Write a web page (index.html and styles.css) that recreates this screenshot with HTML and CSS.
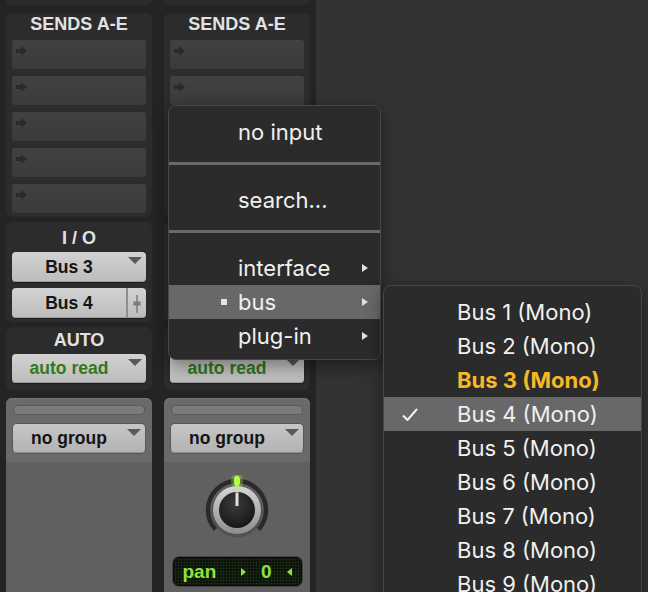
FILE: index.html
```html
<!DOCTYPE html>
<html>
	<head>
		<title>Mix Window - Input Menu</title>
		<link rel="stylesheet" href="styles.css">
	</head>
	<body>
		<div class="mixer">
			<div class="strip">
				<div class="panel stub"></div>
				<div class="panel sends">
					<div class="head">SENDS A-E</div>
					<div class="slot"><svg class="send-arrow" width="11" height="10" viewBox="0 0 11 10"><path d="M0 3H5V0L11 5L5 10V7H0Z"/></svg></div>
					<div class="slot"><svg class="send-arrow" width="11" height="10" viewBox="0 0 11 10"><path d="M0 3H5V0L11 5L5 10V7H0Z"/></svg></div>
					<div class="slot"><svg class="send-arrow" width="11" height="10" viewBox="0 0 11 10"><path d="M0 3H5V0L11 5L5 10V7H0Z"/></svg></div>
					<div class="slot"><svg class="send-arrow" width="11" height="10" viewBox="0 0 11 10"><path d="M0 3H5V0L11 5L5 10V7H0Z"/></svg></div>
					<div class="slot"><svg class="send-arrow" width="11" height="10" viewBox="0 0 11 10"><path d="M0 3H5V0L11 5L5 10V7H0Z"/></svg></div>
				</div>
				<div class="panel io">
					<div class="head">I / O</div>
					<div class="btn tall"><span class="label">Bus 3</span><span class="side"><i class="tri"></i></span></div>
					<div class="btn tall"><span class="label">Bus 4</span><span class="side split"><svg width="10" height="18" viewBox="0 0 10 18"><path d="M5 0V18" stroke="#7a7a7a" stroke-width="1.5"/><rect x="1.5" y="6.5" width="7" height="4" fill="#7a7a7a"/></svg></span></div>
				</div>
				<div class="panel auto">
					<div class="head">AUTO</div>
					<div class="btn green"><span class="label">auto read</span><span class="side"><i class="tri"></i></span></div>
				</div>
				<div class="panel group">
					<div class="bar"></div>
					<div class="btn"><span class="label">no group</span><span class="side"><i class="tri"></i></span></div>
				</div>
				<div class="lower"></div>
			</div>
			<div class="strip">
				<div class="panel stub"></div>
				<div class="panel sends">
					<div class="head">SENDS A-E</div>
					<div class="slot"><svg class="send-arrow" width="11" height="10" viewBox="0 0 11 10"><path d="M0 3H5V0L11 5L5 10V7H0Z"/></svg></div>
					<div class="slot"><svg class="send-arrow" width="11" height="10" viewBox="0 0 11 10"><path d="M0 3H5V0L11 5L5 10V7H0Z"/></svg></div>
					<div class="slot"><svg class="send-arrow" width="11" height="10" viewBox="0 0 11 10"><path d="M0 3H5V0L11 5L5 10V7H0Z"/></svg></div>
					<div class="slot"><svg class="send-arrow" width="11" height="10" viewBox="0 0 11 10"><path d="M0 3H5V0L11 5L5 10V7H0Z"/></svg></div>
					<div class="slot"><svg class="send-arrow" width="11" height="10" viewBox="0 0 11 10"><path d="M0 3H5V0L11 5L5 10V7H0Z"/></svg></div>
				</div>
				<div class="panel io">
					<div class="head">I / O</div>
					<div class="btn tall"><span class="label">Bus 4</span><span class="side"><i class="tri"></i></span></div>
					<div class="btn tall"><span class="label">Out 1-2</span><span class="side split"></span></div>
				</div>
				<div class="panel auto">
					<div class="head">AUTO</div>
					<div class="btn green"><span class="label">auto read</span><span class="side"><i class="tri"></i></span></div>
				</div>
				<div class="panel group">
					<div class="bar"></div>
					<div class="btn"><span class="label">no group</span><span class="side"><i class="tri"></i></span></div>
				</div>
				<div class="lower">
					<svg class="knob" width="70" height="70" viewBox="0 0 70 70">
						<defs>
							<linearGradient id="ring" x1="0" y1="0" x2="0" y2="1">
								<stop offset="0" stop-color="#d6d6d6"/>
								<stop offset="1" stop-color="#8c8c8c"/>
							</linearGradient>
							<radialGradient id="cap" cx="0.45" cy="0.35" r="0.7">
								<stop offset="0" stop-color="#3c3c3c"/>
								<stop offset="1" stop-color="#141414"/>
							</radialGradient>
						</defs>
						<path d="M13.4 54.4A29 29 0 1 1 56.6 54.4" fill="none" stroke="#2a2a2a" stroke-width="4.5"/>
						<circle cx="35" cy="37" r="25.5" fill="#474747" opacity="0.6"/>
						<circle cx="35" cy="35" r="24" fill="url(#ring)"/>
						<circle cx="35" cy="35" r="18" fill="url(#cap)"/>
						<path d="M35 17.5V31" stroke="#e0e0e0" stroke-width="3"/>
						<ellipse cx="35" cy="6" rx="6" ry="8" fill="#9cff2e" opacity="0.3"/>
						<ellipse cx="35" cy="6" rx="3.2" ry="5.5" fill="#b4ff48"/>
					</svg>
					<div class="pan">
						<span class="pan-name">pan</span>
						<i class="pt right"></i>
						<span class="pan-val">0</span>
						<i class="pt left"></i>
					</div>
				</div>
			</div>
		</div>

		<div class="menu input-menu">
			<div class="item"><span class="mark"></span><span>no input</span></div>
			<div class="sep"></div>
			<div class="item"><span class="mark"></span><span>search...</span></div>
			<div class="sep"></div>
			<div class="item"><span class="mark"></span><span>interface</span><i class="arrow"></i></div>
			<div class="item hl"><span class="mark"><i class="bullet"></i></span><span>bus</span><i class="arrow"></i></div>
			<div class="item"><span class="mark"></span><span>plug-in</span><i class="arrow"></i></div>
		</div>

		<div class="menu bus-menu">
			<div class="item"><span class="mark"></span><span>Bus 1 (Mono)</span></div>
			<div class="item"><span class="mark"></span><span>Bus 2 (Mono)</span></div>
			<div class="item used"><span class="mark"></span><span>Bus 3 (Mono)</span></div>
			<div class="item hl"><span class="mark"><svg width="16" height="13" viewBox="0 0 16 13"><path d="M1 7.5L5.5 12L15 1" fill="none" stroke="#f2f2f2" stroke-width="2"/></svg></span><span>Bus 4 (Mono)</span></div>
			<div class="item"><span class="mark"></span><span>Bus 5 (Mono)</span></div>
			<div class="item"><span class="mark"></span><span>Bus 6 (Mono)</span></div>
			<div class="item"><span class="mark"></span><span>Bus 7 (Mono)</span></div>
			<div class="item"><span class="mark"></span><span>Bus 8 (Mono)</span></div>
			<div class="item"><span class="mark"></span><span>Bus 9 (Mono)</span></div>
		</div>
	</body>
</html>
```

FILE: styles.css
```css
body {
	margin: 0;
	padding: 0;
	overflow: hidden;
	height: 592px;
	position: relative;
	background-color: #333333;
	font-family: "Liberation Sans", Arial, sans-serif;
}
.mixer {
	display: flex;
	height: 592px;
}
.strip {
	width: 146px;
	padding: 0 6px;
	display: flex;
	flex-direction: column;
	background-color: #242424;
}
.panel {
	background-color: #2c2c2c;
	border-radius: 6px;
}
.stub {
	height: 5px;
	border-radius: 0 0 6px 6px;
	margin-bottom: 8px;
}
.head {
	height: 27px;
	line-height: 22px;
	text-align: center;
	color: #e2e2e2;
	font-size: 18px;
	font-weight: bold;
}
.sends {
	padding-bottom: 4px;
	margin-bottom: 5px;
}
.slot {
	height: 29px;
	box-sizing: border-box;
	padding: 6px 0 0 4px;
	margin: 0 6px 7px;
	border-radius: 3px;
	background: linear-gradient(#414141, #3b3b3b);
}
.slot:last-child {
	margin-bottom: 0;
}
.send-arrow {
	display: block;
	fill: #2a2a2a;
}
.io {
	padding-bottom: 4px;
	margin-bottom: 5px;
}
.io .head {
	height: 30px;
	line-height: 32px;
}
.io .btn + .btn {
	margin-top: 6px;
}
.auto {
	padding-bottom: 7px;
	margin-bottom: 8px;
}
.auto .head {
	line-height: 27px;
}
.btn {
	display: flex;
	height: 29px;
	margin: 0 6px;
	border-radius: 4px;
	background: linear-gradient(#d2d2d2, #bcbcbc);
	box-shadow: inset 0 -1px 0 #9a9a9a, 0 1px 1px rgba(0, 0, 0, 0.35);
	color: #141414;
	font-size: 17.5px;
	font-weight: bold;
	line-height: 29px;
}
.btn.tall {
	height: 30px;
	line-height: 30px;
}
.btn .label {
	flex: 1;
	text-align: center;
	white-space: nowrap;
}
.btn .side {
	width: 20px;
	position: relative;
}
.btn .side.split {
	border-left: 2px solid #8e8e8e;
	display: flex;
	justify-content: center;
	padding-top: 7px;
	box-sizing: border-box;
}
.tri {
	position: absolute;
	top: 5px;
	right: 4px;
	border-left: 7px solid transparent;
	border-right: 7px solid transparent;
	border-top: 7px solid #5a5a5a;
}
.btn.green {
	color: #2f7a1f;
}
.group {
	background-color: #6a6a6a;
	border-radius: 6px 6px 0 0;
	padding: 7px 0 9px;
	box-shadow: inset 0 1px 0 #767676;
}
.group .btn {
	background: linear-gradient(#c6c6c6, #b2b2b2);
	box-shadow: inset 0 -1px 0 #8e8e8e, 0 0 0 1px #575757;
	margin: 0 7px;
}
.bar {
	height: 8px;
	margin: 0 7px 9px;
	border-radius: 4px;
	border: 1px solid #595959;
	background-color: #7b7b7b;
}
.lower {
	flex: 1;
	background-color: #606060;
	display: flex;
	flex-direction: column;
	align-items: center;
	padding-top: 13px;
}
.knob {
	display: block;
}
.pan {
	margin-top: 12px;
	width: 129px;
	height: 29px;
	box-sizing: border-box;
	display: flex;
	align-items: center;
	padding: 0 9px;
	border: 1px solid #0a0a0a;
	border-radius: 6px;
	box-shadow: 0 0 0 1px #454545;
	background-color: #0d130b;
	background-image: radial-gradient(circle, #1d3318 0.8px, transparent 1.1px);
	background-size: 3px 3px;
	color: #8ee43a;
	font-size: 19px;
	font-weight: bold;
}
.pan-name {
	flex: 1;
	line-height: 28px;
}
.pt {
	border-top: 4.5px solid transparent;
	border-bottom: 4.5px solid transparent;
}
.pt.right {
	border-left: 5px solid #8ee43a;
}
.pt.left {
	border-right: 5px solid #8ee43a;
}
.pan-val {
	margin: 0 15px;
}

.menu {
	position: absolute;
	background-color: #2b2b2b;
	border: 1px solid #474747;
	border-radius: 8px;
	box-shadow: 0 6px 18px rgba(0, 0, 0, 0.45);
	font-family: Inter, "Noto Sans", sans-serif;
	font-size: 22px;
	color: #f0f0f0;
	padding: 9px 0 6px;
}
.input-menu {
	left: 168px;
	top: 105px;
	width: 211px;
}
.bus-menu {
	left: 383px;
	top: 285px;
	width: 257px;
	height: 330px;
}
.item {
	display: flex;
	align-items: center;
	height: 34px;
	white-space: nowrap;
}
.item.hl {
	background-color: #686868;
}
.item.used {
	color: #f5b827;
	font-weight: bold;
}
.mark {
	display: flex;
	align-items: center;
	flex-shrink: 0;
}
.input-menu .mark {
	width: 58px;
	padding-right: 11px;
	justify-content: flex-end;
}
.bus-menu .mark {
	width: 55px;
	padding-left: 18px;
}
.bullet {
	width: 6px;
	height: 6px;
	background-color: #e4e4e4;
}
.arrow {
	margin-left: auto;
	margin-right: 12px;
	border-left: 6px solid #e0e0e0;
	border-top: 4px solid transparent;
	border-bottom: 4px solid transparent;
}
.sep {
	height: 3px;
	margin: 13px 0 18px;
	background-color: #6a6a6a;
}
```
